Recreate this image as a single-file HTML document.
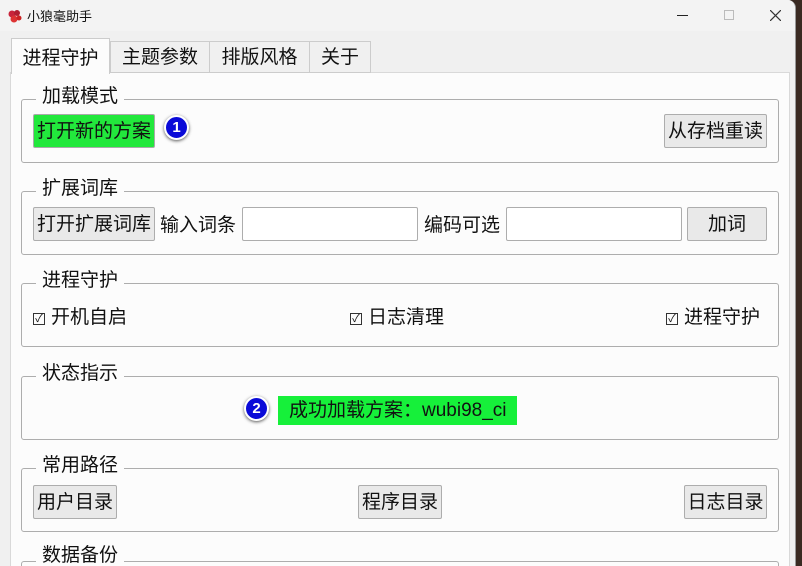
<!DOCTYPE html><html><head><meta charset="utf-8"><style>
*{box-sizing:border-box;margin:0;padding:0}
html,body{width:802px;height:566px;overflow:hidden}
body{background:#3a2a22;position:relative;font-family:"Liberation Sans","Noto Sans CJK SC",sans-serif;color:#111}
.win{position:absolute;left:0;top:0;width:796px;height:566px;background:#f0f0f0;border-radius:0 8px 0 0;border-right:1px solid #999;overflow:hidden}
.title{position:absolute;left:0;top:0;width:795px;height:31px;background:#f3f3f3}
.abs{position:absolute}
.tab{position:absolute;top:41px;height:32px;border:1px solid #ccc;background:#f0f0f0;font-size:19px;line-height:32px;text-align:center}
.panel{position:absolute;left:10px;top:72px;width:780px;height:494px;background:#fcfcfc;border:1px solid #d9d9d9;border-bottom:none}
.grp{position:absolute;left:21px;width:758px;height:64px;border:1px solid #adadad;border-radius:3px}
.lbl{position:absolute;left:36px;font-size:19px;background:#fcfcfc;padding:0 6px;line-height:22px}
.btn{position:absolute;height:34px;border:1px solid #adadad;border-radius:2px;background:#e9e9e9;font-size:19px;line-height:34px;text-align:center;white-space:nowrap}
.inp{position:absolute;height:34px;border:1px solid #adadad;background:#fff;border-radius:2px}
.t{position:absolute;font-size:19px;line-height:22px}
.cb{position:absolute;font-size:19px;line-height:22px;white-space:nowrap}
.cb i{display:inline-block;width:12px;height:12px;border:1px solid #333;font-style:normal;font-size:11px;line-height:10px;text-align:center;margin-right:6px;vertical-align:1px}
.num{position:absolute;width:25px;height:25px;border-radius:50%;background:#0a0ad8;border:2px solid #fff;box-shadow:0 1px 3px #555;color:#fff;font-weight:bold;font-size:15px;line-height:21px;text-align:center}
</style></head><body>
<div class="win">
<div class="title"></div>
<svg class="abs" style="left:7px;top:8px" width="16" height="16" viewBox="0 0 16 16"><circle cx="5" cy="6" r="3.5" fill="#c8243a"/><circle cx="10" cy="5" r="3" fill="#b01e30"/><circle cx="7" cy="11" r="3.5" fill="#d33"/><circle cx="12" cy="10" r="2.5" fill="#c22"/></svg>
<div class="abs" style="left:27px;top:6px;font-size:13px">小狼毫助手</div>
<div class="abs" style="left:677px;top:15px;width:11px;height:1px;background:#222"></div>
<div class="abs" style="left:724px;top:10px;width:10px;height:10px;border:1px solid #bbb"></div>
<svg class="abs" style="left:770px;top:10px" width="11" height="11"><path d="M0 0L11 11M11 0L0 11" stroke="#333" stroke-width="1.2"/></svg>
<div class="panel"></div>
<div class="tab" style="left:11px;top:38px;height:36px;width:99px;background:#fcfcfc;border-bottom:none;line-height:40px">进程守护</div>
<div class="tab" style="left:110px;width:100px">主题参数</div>
<div class="tab" style="left:209px;width:101px">排版风格</div>
<div class="tab" style="left:309px;width:62px">关于</div>

<div class="grp" style="top:99px"></div><div class="lbl" style="top:86px">加载模式</div>
<div class="btn" style="left:33px;top:114px;width:122px;background:#22e83c;border-color:#aaa">打开新的方案</div>
<div class="num" style="left:164px;top:115px">1</div>
<div class="btn" style="left:664px;top:114px;width:103px">从存档重读</div>

<div class="grp" style="top:191px"></div><div class="lbl" style="top:178px">扩展词库</div>
<div class="btn" style="left:33px;top:207px;width:122px">打开扩展词库</div>
<div class="t" style="left:160px;top:215px">输入词条</div>
<div class="inp" style="left:242px;top:207px;width:176px"></div>
<div class="t" style="left:424px;top:215px">编码可选</div>
<div class="inp" style="left:506px;top:207px;width:176px"></div>
<div class="btn" style="left:687px;top:207px;width:80px">加词</div>

<div class="grp" style="top:283px"></div><div class="lbl" style="top:270px">进程守护</div>
<div class="cb" style="left:33px;top:307px"><i>✓</i>开机自启</div>
<div class="cb" style="left:350px;top:307px"><i>✓</i>日志清理</div>
<div class="cb" style="left:666px;top:307px"><i>✓</i>进程守护</div>

<div class="grp" style="top:376px"></div><div class="lbl" style="top:363px">状态指示</div>
<div class="num" style="left:244px;top:396px">2</div>
<div class="abs" style="left:278px;top:396px;width:239px;height:29px;background:#16f03a;font-size:19px;line-height:30px;padding-left:11px;white-space:nowrap">成功加载方案：wubi98_ci</div>

<div class="grp" style="top:468px"></div><div class="lbl" style="top:455px">常用路径</div>
<div class="btn" style="left:33px;top:485px;width:84px">用户目录</div>
<div class="btn" style="left:358px;top:485px;width:84px">程序目录</div>
<div class="btn" style="left:684px;top:485px;width:83px">日志目录</div>

<div class="grp" style="top:561px;height:5px;border-bottom:none;border-radius:3px 3px 0 0"></div><div class="lbl" style="top:545px;line-height:21px;height:21px;overflow:hidden">数据备份</div>
</div>
</body></html>
